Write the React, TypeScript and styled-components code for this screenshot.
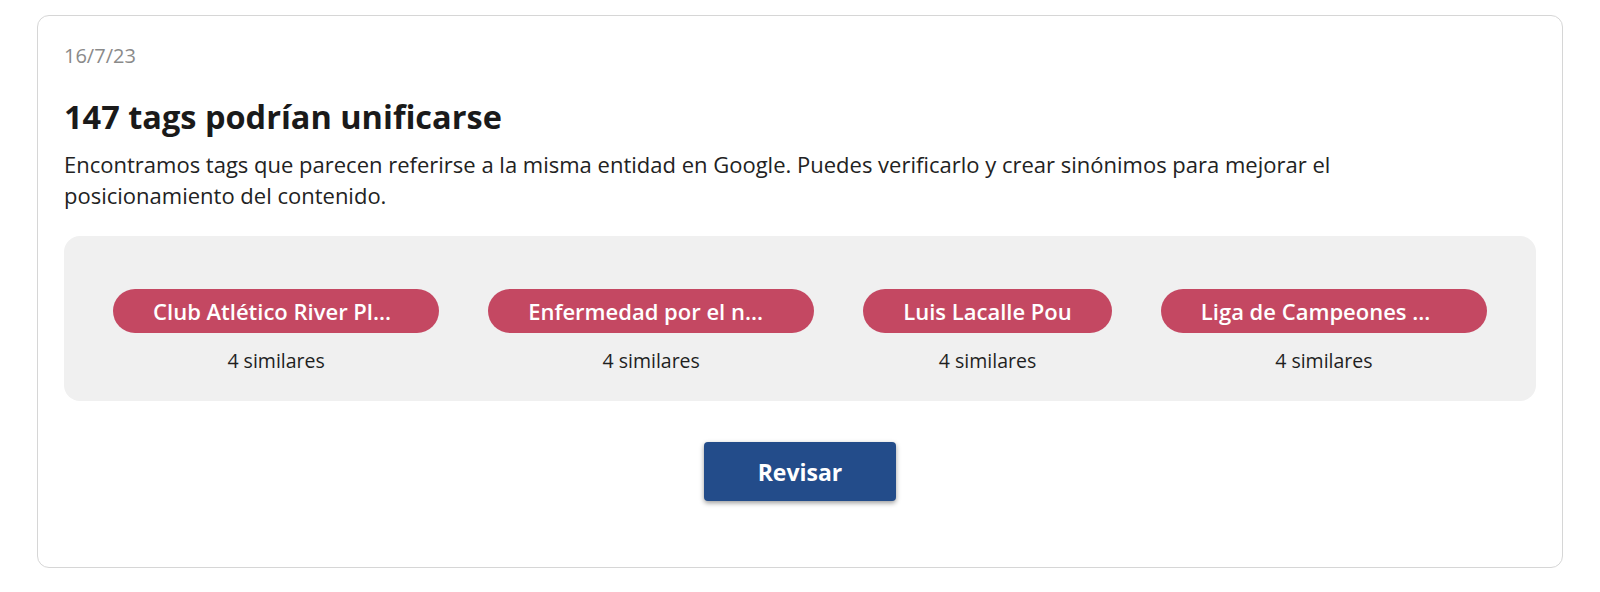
import React from "react";
import styled, { createGlobalStyle } from "styled-components";

const GlobalStyle = createGlobalStyle`
  html, body {
    margin: 0;
    padding: 0;
    background: #ffffff;
  }
  body {
    font-family: "Open Sans", "Noto Sans", "Liberation Sans", sans-serif;
    color: #1c1c1c;
  }
  * { box-sizing: border-box; }
`;

const Card = styled.section`
  margin: 15px 37px 0;
  border: 1px solid #d6d6d6;
  border-radius: 12px;
  padding: 26px 26px 66px;
  display: flex;
  flex-direction: column;
`;

const DateLabel = styled.div`
  font-size: 20px;
  line-height: 27px;
  color: #8a8a8a;
`;

const Title = styled.h2`
  margin: 28px 0 0;
  font-size: 32.5px;
  line-height: 40px;
  font-weight: 700;
  color: #1a1a1a;
`;

const Description = styled.p`
  margin: 12px 0 0;
  max-width: 1400px;
  font-size: 22px;
  line-height: 31px;
  color: #222222;
`;

const TagPanel = styled.div`
  margin-top: 25px;
  background: #f0f0f0;
  border-radius: 16px;
  padding: 53px 0 25px;
  display: flex;
  justify-content: space-evenly;
  align-items: flex-start;
`;

const TagItem = styled.div`
  display: flex;
  flex-direction: column;
  align-items: center;
  gap: 13px;
`;

const TagPill = styled.span<{ $truncated: boolean }>`
  display: block;
  width: ${(p) => (p.$truncated ? "326px" : "auto")};
  max-width: 326px;
  height: 44px;
  padding: 0 40px;
  border-radius: 22px;
  background: #c44862;
  color: #ffffff;
  font-size: 22px;
  font-weight: 600;
  line-height: 44px;
  white-space: nowrap;
  overflow: hidden;
`;

const SimilarCount = styled.span`
  font-size: 19.5px;
  line-height: 30px;
  color: #1f1f1f;
`;

const Actions = styled.div`
  margin-top: 41px;
  display: flex;
  justify-content: center;
`;

const ReviewButton = styled.button`
  width: 192px;
  height: 59px;
  border: none;
  border-radius: 4px;
  background: #234c8a;
  color: #ffffff;
  font-family: inherit;
  font-size: 23px;
  font-weight: 700;
  box-shadow: 0 2px 5px rgba(0, 0, 0, 0.4);
  cursor: pointer;
`;

const tags = [
  { name: "Club Atlético River Plate", label: "Club Atlético River Pl...", similar: 4 },
  { name: "Enfermedad por el nuevo coronavirus", label: "Enfermedad por el n...", similar: 4 },
  { name: "Luis Lacalle Pou", label: "Luis Lacalle Pou", similar: 4 },
  { name: "Liga de Campeones de la UEFA", label: "Liga de Campeones ...", similar: 4 },
];

export default function App() {
  return (
    <>
      <GlobalStyle />
      <Card>
        <DateLabel>16/7/23</DateLabel>
        <Title>147 tags podrían unificarse</Title>
        <Description>
          Encontramos tags que parecen referirse a la misma entidad en Google. Puedes verificarlo y
          crear sinónimos para mejorar el posicionamiento del contenido.
        </Description>
        <TagPanel>
          {tags.map((t) => (
            <TagItem key={t.name}>
              <TagPill title={t.name} $truncated={t.label !== t.name}>
                {t.label}
              </TagPill>
              <SimilarCount>{t.similar} similares</SimilarCount>
            </TagItem>
          ))}
        </TagPanel>
        <Actions>
          <ReviewButton>Revisar</ReviewButton>
        </Actions>
      </Card>
    </>
  );
}
